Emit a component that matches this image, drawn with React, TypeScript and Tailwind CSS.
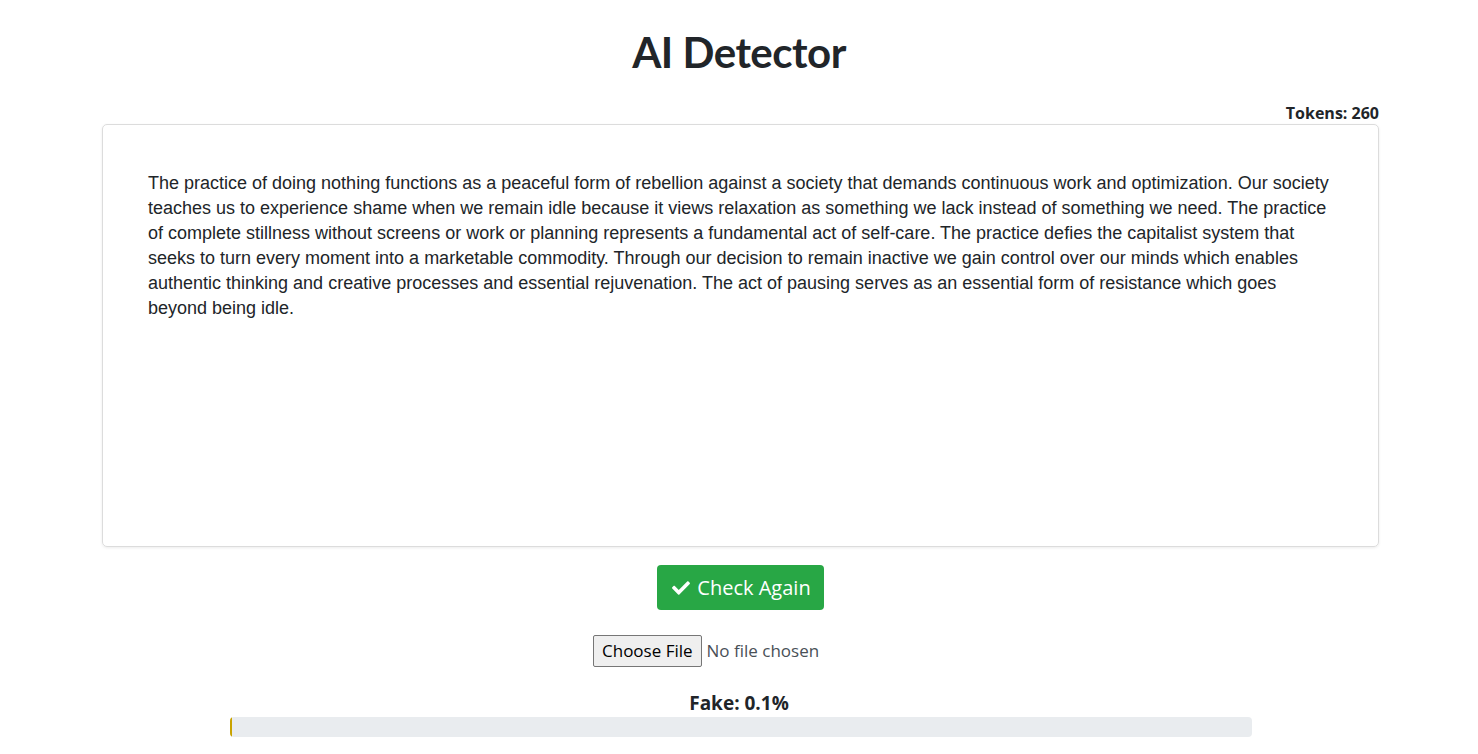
import React from "react";

const text =
  "The practice of doing nothing functions as a peaceful form of rebellion against a society that demands continuous work and optimization. Our society teaches us to experience shame when we remain idle because it views relaxation as something we lack instead of something we need. The practice of complete stillness without screens or work or planning represents a fundamental act of self-care. The practice defies the capitalist system that seeks to turn every moment into a marketable commodity. Through our decision to remain inactive we gain control over our minds which enables authentic thinking and creative processes and essential rejuvenation. The act of pausing serves as an essential form of resistance which goes beyond being idle.";

export default function App() {
  const fake = 0.1;
  return (
    <div className="min-h-screen bg-white text-[#212529] font-['Open_Sans',sans-serif]">
      <h1 className="pt-[26px] text-center text-[42px] leading-[52px] font-bold tracking-[-0.5px] font-['Lato',sans-serif]">
        AI Detector
      </h1>
      <div className="w-[1277px] ml-[102px] mt-[24px]">
        <div className="text-right text-[16px] leading-[22px] font-bold">Tokens: 260</div>
        <div className="h-[423px] border border-[#dcdcdc] rounded-[5px] shadow-[0_1px_3px_rgba(0,0,0,0.08)] pt-[46px] pl-[45px] pr-[45px]">
          <p className="font-['Liberation_Sans',Arial,sans-serif] text-[18px] leading-[25px] text-[#212529]">
            {text}
          </p>
        </div>
      </div>
      <div className="flex justify-center mt-[18px] pl-[3px]">
        <button className="flex items-center gap-[6px] h-[45px] pl-[14px] pr-[13px] rounded-[4px] bg-[#28a745] text-white text-[20px]">
          <svg width="20" height="18" viewBox="0 0 512 512" fill="currentColor">
            <path d="M173.9 439.4l-166.4-166.4c-10-10-10-26.2 0-36.2l36.2-36.2c10-10 26.2-10 36.2 0L192 312.7 432.1 72.6c10-10 26.2-10 36.2 0l36.2 36.2c10 10 10 26.2 0 36.2L210.1 439.4c-10 10-26.2 10-36.2 0z" />
          </svg>
          Check Again
        </button>
      </div>
      <div className="flex justify-center mt-[25px]">
        <input
          type="file"
          className="w-[292px] text-[17px] leading-[24px] text-[#495057] file:mr-[5px] file:h-[32px] file:px-[8px] file:border file:border-[#767676] file:rounded-[2px] file:bg-[#efefef] file:text-black file:text-[17px]"
        />
      </div>
      <div className="text-center mt-[25px] text-[19px] leading-[22px] font-bold">Fake: {fake}%</div>
      <div className="w-[1022px] ml-[230px] mt-[3px] h-[20px] rounded-[4px] bg-[#e9ecef] overflow-hidden">
        <div className="h-full bg-[#c9a300]" style={{ width: `${Math.max(fake, 0.15)}%` }} />
      </div>
    </div>
  );
}
